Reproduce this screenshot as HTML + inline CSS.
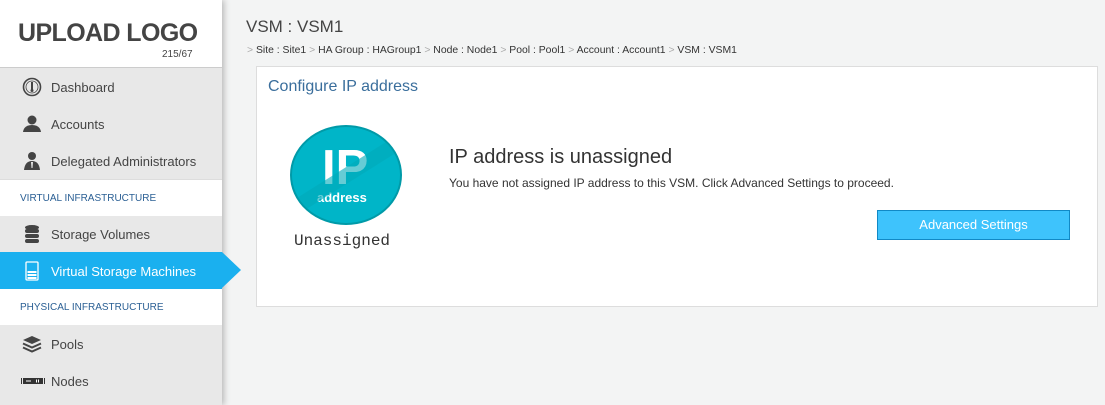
<!DOCTYPE html>
<html><head><style>
body{margin:0;width:1105px;height:405px;background:#f3f4f4;font-family:"Liberation Sans",sans-serif;position:relative;overflow:hidden;color:#333}
.sb{position:absolute;left:0;top:0;width:222px;height:405px;background:#e8e8e8;box-shadow:2px 0 6px rgba(0,0,0,.25)}
.logo{position:absolute;left:0;top:0;width:222px;height:67px;background:#fff;border-bottom:1px solid #ccc}
.logo b{position:absolute;left:18px;top:19px;font-size:25px;color:#444;letter-spacing:-0.6px}
.logo span{position:absolute;left:162px;top:49px;font-size:10px;color:#444}
.it{position:absolute;left:0;width:222px;height:37px;font-size:13px;color:#444}
.it .t{position:absolute;left:51px;top:12px}
.it svg{position:absolute;left:22px;top:9px}
.sec{position:absolute;left:0;width:222px;height:36px;background:#fff;font-size:10px;color:#2a5f94;border-top:1px solid #ddd}
.sec span{position:absolute;left:20px;top:13px}
.act{background:#1ab0ef;color:#fff}
.act:after{content:"";position:absolute;left:222px;top:0;border-left:19px solid #1ab0ef;border-top:18.5px solid transparent;border-bottom:18.5px solid transparent}
</style></head><body>
<div class="sb">
<div class="logo"><b>UPLOAD LOGO</b><span>215/67</span></div>
<div class="it" style="top:68px"><svg width="20" height="20" viewBox="0 0 20 20"><circle cx="10" cy="10" r="8.5" fill="none" stroke="#444" stroke-width="1.6"/><circle cx="10" cy="10" r="6" fill="none" stroke="#444" stroke-width=".8"/><rect x="9" y="5" width="2" height="8" fill="#444"/><circle cx="10" cy="13.5" r="1.5" fill="#444"/></svg><span class="t">Dashboard</span></div>
<div class="it" style="top:105px"><svg width="20" height="20" viewBox="0 0 20 20"><circle cx="10" cy="6" r="4.5" fill="#444"/><path d="M1 18 Q2 11 10 11 Q18 11 19 18Z" fill="#444"/></svg><span class="t">Accounts</span></div>
<div class="it" style="top:142px"><svg width="20" height="20" viewBox="0 0 20 20"><circle cx="10" cy="5" r="4" fill="#444"/><path d="M2 19 Q3 10 10 10 Q17 10 18 19Z" fill="#444"/><path d="M9 11h2l-0.5 6h-1z" fill="#e8e8e8"/></svg><span class="t">Delegated Administrators</span></div>
<div class="sec" style="top:179px"><span>VIRTUAL INFRASTRUCTURE</span></div>
<div class="it" style="top:215px"><svg width="20" height="20" viewBox="0 0 20 20"><ellipse cx="10" cy="3.5" rx="7" ry="2.5" fill="#444"/><rect x="3" y="5" width="14" height="4" rx="2" fill="#444"/><rect x="3" y="10" width="14" height="4" rx="2" fill="#444"/><rect x="3" y="15" width="14" height="4" rx="2" fill="#444"/></svg><span class="t">Storage Volumes</span></div>
<div class="it act" style="top:252px"><svg width="20" height="20" viewBox="0 0 20 20"><rect x="4" y="1" width="12" height="18" rx="1" fill="none" stroke="#fff" stroke-width="1.3"/><rect x="5.5" y="10" width="9" height="2" fill="#fff"/><rect x="5.5" y="13" width="9" height="2" fill="#fff"/><rect x="5.5" y="16" width="9" height="2" fill="#fff"/></svg><span class="t">Virtual Storage Machines</span></div>
<div class="sec" style="top:289px;border-top:none"><span>PHYSICAL INFRASTRUCTURE</span></div>
<div class="it" style="top:325px"><svg width="20" height="20" viewBox="0 0 20 20"><path d="M10 2 L19 6 L10 10 L1 6Z" fill="#444"/><path d="M1 9.5 L10 13.5 L19 9.5" fill="none" stroke="#444" stroke-width="2"/><path d="M1 13.5 L10 17.5 L19 13.5" fill="none" stroke="#444" stroke-width="2"/></svg><span class="t">Pools</span></div>
<div class="it" style="top:362px"><svg width="26" height="20" viewBox="0 0 26 20" style="left:20px"><rect x="3" y="7" width="20" height="6" fill="#333"/><rect x="1" y="7" width="1" height="6" fill="#333"/><rect x="24" y="7" width="1" height="6" fill="#333"/><rect x="6" y="9.5" width="5" height="1" fill="#fff"/><rect x="16" y="8.5" width="1" height="3" fill="#fff"/><rect x="18" y="8.5" width="1" height="3" fill="#fff"/></svg><span class="t">Nodes</span></div>
</div>
<div style="position:absolute;left:246px;top:17px;font-size:17px;color:#444">VSM : VSM1</div>
<div style="position:absolute;left:247px;top:45px;font-size:10.4px;color:#333"><span style="color:#aaa">&gt;</span> Site : Site1 <span style="color:#aaa">&gt;</span> HA Group : HAGroup1 <span style="color:#aaa">&gt;</span> Node : Node1 <span style="color:#aaa">&gt;</span> Pool : Pool1 <span style="color:#aaa">&gt;</span> Account : Account1 <span style="color:#aaa">&gt;</span> VSM : VSM1</div>
<div style="position:absolute;left:256px;top:66px;width:840px;height:239px;background:#fff;border:1px solid #ddd">
<div style="position:absolute;left:11px;top:11px;font-size:16px;color:#3a6e9c">Configure IP address</div>
<svg style="position:absolute;left:32px;top:57px" width="114" height="102" viewBox="0 0 114 102"><defs><clipPath id="c"><ellipse cx="57" cy="51" rx="54" ry="48"/></clipPath></defs><ellipse cx="57" cy="51" rx="55" ry="49" fill="#00b5c8" stroke="#009aa8" stroke-width="2"/><text x="33" y="60" font-family="Liberation Sans" font-weight="bold" font-size="49" fill="#fff">IP</text><text x="28" y="78" font-family="Liberation Sans" font-weight="bold" font-size="13" fill="#fff">address</text><path d="M0 79 L105 13 L113 25 L8 91Z" fill="#00aab9" opacity=".6" clip-path="url(#c)"/></svg>
<div style="position:absolute;left:37px;top:165px;font-family:'Liberation Mono',monospace;font-size:16px;color:#333">Unassigned</div>
<div style="position:absolute;left:192px;top:79px;font-size:20px;color:#333">IP address is unassigned</div>
<div style="position:absolute;left:192px;top:109px;font-size:12px;color:#333">You have not assigned IP address to this VSM. Click Advanced Settings to proceed.</div>
<div style="position:absolute;left:620px;top:143px;width:191px;height:28px;background:#3ec3fc;border:1px solid #1189c6;color:#fff;font-size:13px;text-align:center;line-height:28px">Advanced Settings</div>
</div>
</body></html>
